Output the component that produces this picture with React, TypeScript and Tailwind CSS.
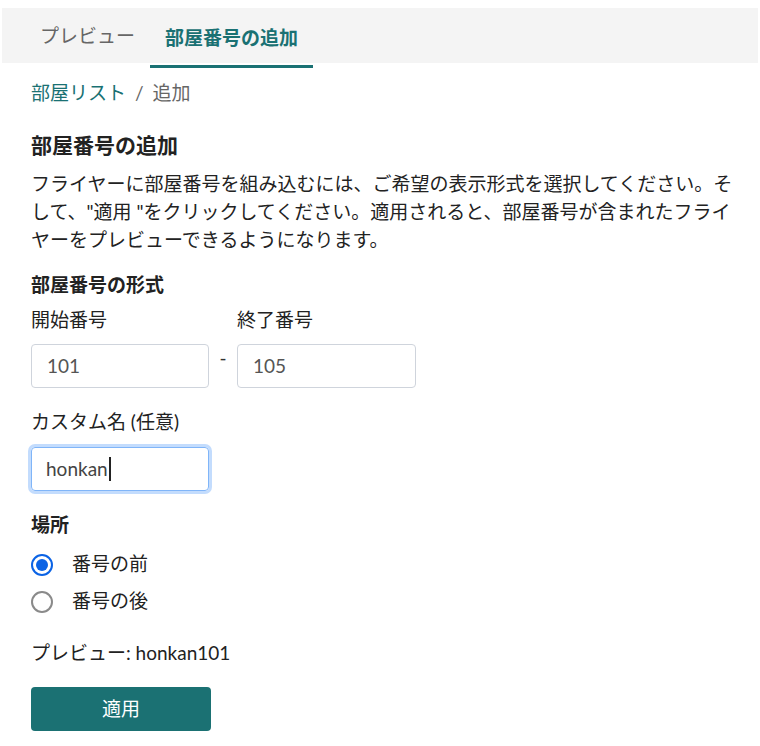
import React from "react";

const font = "font-['Lato','Noto_Sans_CJK_JP',sans-serif]";

const Radio = ({ checked, label }: { checked: boolean; label: string }) => (
  <label className="flex h-[29px] items-center gap-[19px]">
    <span
      className={`flex h-[22px] w-[22px] items-center justify-center rounded-full border-2 ${
        checked ? "border-[#0b63e5]" : "border-[#8a8a8a]"
      }`}
    >
      {checked && <span className="h-[12px] w-[12px] rounded-full bg-[#0b63e5]" />}
    </span>
    <span>{label}</span>
  </label>
);

const App = () => {
  return (
    <div className={`${font} min-h-[746px] bg-white pt-2 text-[19px] text-[#222]`}>
      {/* tabs */}
      <nav className="mx-[2px] flex h-[55px] items-start bg-[#f4f4f4] pl-[23px]">
        <button className="flex h-[57px] items-center px-[15px] text-[#666]">
          プレビュー
        </button>
        <button className="flex h-[60px] items-center border-b-[3px] border-[#1a7173] px-[15px] pt-[3px] font-bold text-[#1a7173]">
          部屋番号の追加
        </button>
      </nav>

      <div className="pl-[31px] pr-[14px]">
        <div className="mt-[15px] flex leading-[29px]">
          <span className="text-[#1a7173]">部屋リスト</span>
          <span className="mx-[9px] text-[#666]">/</span>
          <span className="text-[#666]">追加</span>
        </div>

        <h2 className="mt-[23px] text-[21px] font-bold leading-[30px]">部屋番号の追加</h2>
        <p className="mt-[10px] leading-[28px]">
          フライヤーに部屋番号を組み込むには、ご希望の表示形式を選択してください。そして、"適用
          "をクリックしてください。適用されると、部屋番号が含まれたフライヤーをプレビューできるようになります。
        </p>

        <h3 className="mt-[17px] font-bold leading-[28px]">部屋番号の形式</h3>
        <div className="mt-[7px] flex items-end">
          <div className="flex flex-col">
            <span className="leading-[28px]">開始番号</span>
            <div className="mt-[10px] flex h-[44px] w-[178px] items-center rounded-[4px] border border-[#cfd4dc] px-[15px] text-[#555]">
              101
            </div>
          </div>
          <span className="mb-[22px] w-[28px] text-center leading-[16px] text-[#333]">-</span>
          <div className="flex flex-col">
            <span className="leading-[28px]">終了番号</span>
            <div className="mt-[10px] flex h-[44px] w-[179px] items-center rounded-[4px] border border-[#cfd4dc] px-[15px] text-[#555]">
              105
            </div>
          </div>
        </div>

        <div className="mt-[20px] leading-[28px]">カスタム名 (任意)</div>
        <div className="mt-[11px] flex h-[44px] w-[178px] items-center rounded-[4px] border border-[#80b5f8] px-[14px] text-[#444] ring-[3px] ring-[#c3dcfd]">
          honkan
          <span className="ml-[1px] h-[24px] w-[2px] bg-[#222]" />
        </div>

        <h3 className="mt-[20px] font-bold leading-[28px]">場所</h3>
        <div className="mt-[11px] flex flex-col gap-2">
          <Radio checked label="番号の前" />
          <Radio checked={false} label="番号の後" />
        </div>

        <div className="mt-[23px] leading-[28px]">プレビュー: honkan101</div>

        <button className="mt-[20px] flex h-[44px] w-[180px] items-center justify-center rounded-[4px] bg-[#1b7173] text-white">
          適用
        </button>
      </div>
    </div>
  );
};

export default App;
